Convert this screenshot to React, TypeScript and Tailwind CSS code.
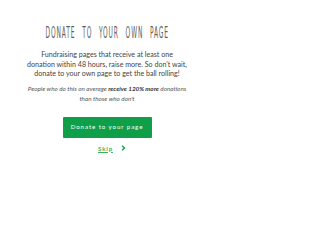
import React from "react";

export default function App() {
  return (
    <div className="w-[214px] h-[243px] bg-white flex flex-col items-center font-['Lato',sans-serif] text-[#3c3c3c]">
      <h1 className="mt-[26px] whitespace-nowrap text-[15px] leading-[14px] tracking-[2px] [word-spacing:9px] uppercase text-[#5e5e5e] font-['DejaVu_Sans_Condensed',sans-serif] font-extralight scale-x-[0.44]">
        Donate to your own page
      </h1>
      <p className="mt-[10px] text-center text-[7.1px] leading-[9.5px] text-[#444] w-[190px]">
        Fundraising pages that receive at least one<br />donation within 48 hours, raise more. So don't wait,<br />donate to your own page to get the ball rolling!
      </p>
      <p className="mt-[5px] text-center text-[6.3px] leading-[10.5px] italic text-[#555] w-[210px]">
        People who do this on average <b className="font-bold text-[#333]">receive 120% more</b> donations<br />than those who don't
      </p>
      <button className="mt-[12px] w-[89px] h-[21px] bg-[#0e9f48] text-white text-[6.2px] tracking-[0.9px] whitespace-nowrap rounded-[1px]">
        Donate to your page
      </button>
      <div className="mt-[6px] flex items-center gap-[8px] pl-[10px]">
        <span className="text-[6.2px] tracking-[0.8px] underline text-[#3db05e] font-bold">Skip</span>
        <svg width="5" height="6" viewBox="0 0 5 6">
          <path d="M1.2 0.8 L3.4 3 L1.2 5.2" stroke="#1b9e4b" strokeWidth="1.5" fill="none" />
        </svg>
      </div>
    </div>
  );
}
